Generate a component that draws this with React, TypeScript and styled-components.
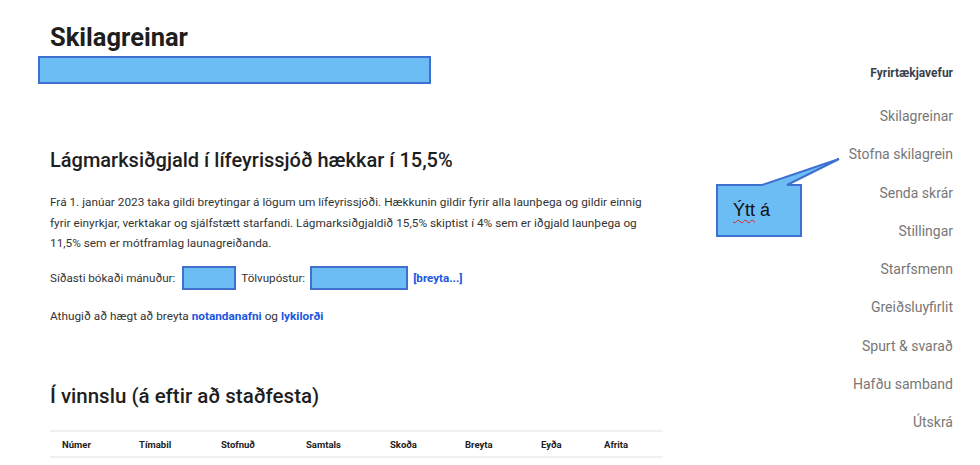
import styled, { createGlobalStyle } from 'styled-components';

const GlobalStyle = createGlobalStyle`
	html, body {
		margin: 0;
		padding: 0;
		background: #fff;
		font-family: 'Roboto', 'Liberation Sans', sans-serif;
		color: #222;
	}
`;

const navItems = [
	'Skilagreinar',
	'Stofna skilagrein',
	'Senda skrár',
	'Stillingar',
	'Starfsmenn',
	'Greiðsluyfirlit',
	'Spurt & svarað',
	'Hafðu samband',
	'Útskrá',
];

const columns = [
	{ label: 'Númer', width: 77 },
	{ label: 'Tímabil', width: 82 },
	{ label: 'Stofnuð', width: 85 },
	{ label: 'Samtals', width: 84 },
	{ label: 'Skoða', width: 75 },
	{ label: 'Breyta', width: 76 },
	{ label: 'Eyða', width: 63 },
	{ label: 'Afrita', width: 71 },
];

export default function App() {
	return (
		<Page>
			<GlobalStyle />
			<Main>
				<Title>Skilagreinar</Title>
				<Redacted $width={393} $height={28} $shift={-12} />
				<Heading>Lágmarksiðgjald í lífeyrissjóð hækkar í 15,5%</Heading>
				<Paragraph>
					Frá 1. janúar 2023 taka gildi breytingar á lögum um lífeyrissjóði.
					Hækkunin gildir fyrir alla launþega og gildir einnig
					<br />
					fyrir einyrkjar, verktakar og sjálfstætt starfandi.
					Lágmarksiðgjaldið 15,5% skiptist í 4% sem er iðgjald launþega og
					<br />
					11,5% sem er mótframlag launagreiðanda.
				</Paragraph>
				<InfoRow>
					<span>Síðasti bókaði mánuður:</span>
					<Redacted $width={54} $height={24} />
					<span>Tölvupóstur:</span>
					<Redacted $width={98} $height={24} />
					<Link href='#'>[breyta...]</Link>
				</InfoRow>
				<Note>
					Athugið að hægt að breyta <Link href='#'>notandanafni</Link> og{' '}
					<Link href='#'>lykilorði</Link>
				</Note>
				<SectionHeading>Í vinnslu (á eftir að staðfesta)</SectionHeading>
				<Table>
					<thead>
						<tr>
							{columns.map((col) => (
								<Th key={col.label} style={{ width: col.width }}>
									{col.label}
								</Th>
							))}
						</tr>
					</thead>
				</Table>
			</Main>
			<Sidebar>
				<NavTitle>Fyrirtækjavefur</NavTitle>
				{navItems.map((item) => (
					<NavItem key={item}>{item}</NavItem>
				))}
			</Sidebar>
			<Callout>
				<svg width='140' height='90' viewBox='0 0 140 90'>
					<path
						d='M2 30 H47 L124 4 L72 30 H86 V81 H2 Z'
						fill='#6dbdf5'
						stroke='#3f6fcf'
						strokeWidth='2'
						strokeLinejoin='miter'
					/>
				</svg>
				<CalloutText>
					<Squiggle>Ýtt</Squiggle> á
				</CalloutText>
			</Callout>
		</Page>
	);
}

const Page = styled.div`
	position: relative;
	display: flex;
	width: 980px;
	height: 465px;
	overflow: hidden;
	box-sizing: border-box;
	padding: 0 27px 0 50px;
`;

const Main = styled.section`
	width: 613px;
	display: flex;
	flex-direction: column;
	align-items: flex-start;
`;

const Title = styled.h1`
	margin: 23px 0 5px;
	font-size: 25.5px;
	font-weight: 700;
	line-height: 28px;
	color: #1e1e1e;
`;

const Redacted = styled.div<{ $width: number; $height: number; $shift?: number }>`
	width: ${(p) => p.$width}px;
	height: ${(p) => p.$height}px;
	margin-left: ${(p) => p.$shift ?? 0}px;
	box-sizing: border-box;
	background: #6dbdf5;
	border: 2px solid #3f6fcf;
	flex-shrink: 0;
`;

const Heading = styled.h2`
	margin: 62px 0 0;
	font-size: 20px;
	font-weight: 500;
	line-height: 28px;
	color: #1e1e1e;
	white-space: nowrap;
`;

const Paragraph = styled.p`
	margin: 18px 0 0;
	font-size: 11.8px;
	line-height: 20.5px;
	color: #333;
	width: 620px;
	white-space: nowrap;
`;

const InfoRow = styled.div`
	margin-top: 12px;
	display: flex;
	align-items: center;
	gap: 5px;
	font-size: 11.6px;
	color: #333;

	& > span:first-child {
		margin-right: 2px;
	}
`;

const Link = styled.a`
	color: #1a56e0;
	font-weight: 700;
	text-decoration: none;
`;

const Note = styled.p`
	margin: 19px 0 0;
	font-size: 11.8px;
	color: #333;
`;

const SectionHeading = styled.h2`
	margin: 59px 0 0;
	font-size: 20.5px;
	font-weight: 500;
	line-height: 28px;
	color: #1e1e1e;
`;

const Table = styled.table`
	margin-top: 20px;
	width: 613px;
	border-collapse: collapse;
	border-top: 2px solid #eef0f4;
	border-bottom: 2px solid #eef0f4;
`;

const Th = styled.th`
	text-align: left;
	padding: 7px 0 6px 12px;
	font-size: 9.5px;
	font-weight: 700;
	color: #222;
	box-sizing: border-box;
`;

const Sidebar = styled.nav`
	flex: 1;
	display: flex;
	flex-direction: column;
	align-items: flex-end;
	padding-top: 65px;
`;

const NavTitle = styled.div`
	font-size: 12px;
	font-weight: 700;
	color: #3a3f4a;
	line-height: 16px;
	margin-bottom: 26px;
`;

const NavItem = styled.div`
	font-size: 14px;
	color: #777;
	line-height: 18px;
	margin-bottom: 20.3px;
`;

const Callout = styled.div`
	position: absolute;
	left: 715px;
	top: 155px;
	width: 140px;
	height: 90px;

	svg {
		display: block;
	}
`;

const CalloutText = styled.div`
	position: absolute;
	left: 18px;
	top: 45px;
	font-family: 'Liberation Sans', 'Open Sans', sans-serif;
	font-size: 18px;
	color: #111;
`;

const Squiggle = styled.span`
	text-decoration: underline wavy #d22;
	text-decoration-thickness: 1px;
	text-underline-offset: 3px;
`;
